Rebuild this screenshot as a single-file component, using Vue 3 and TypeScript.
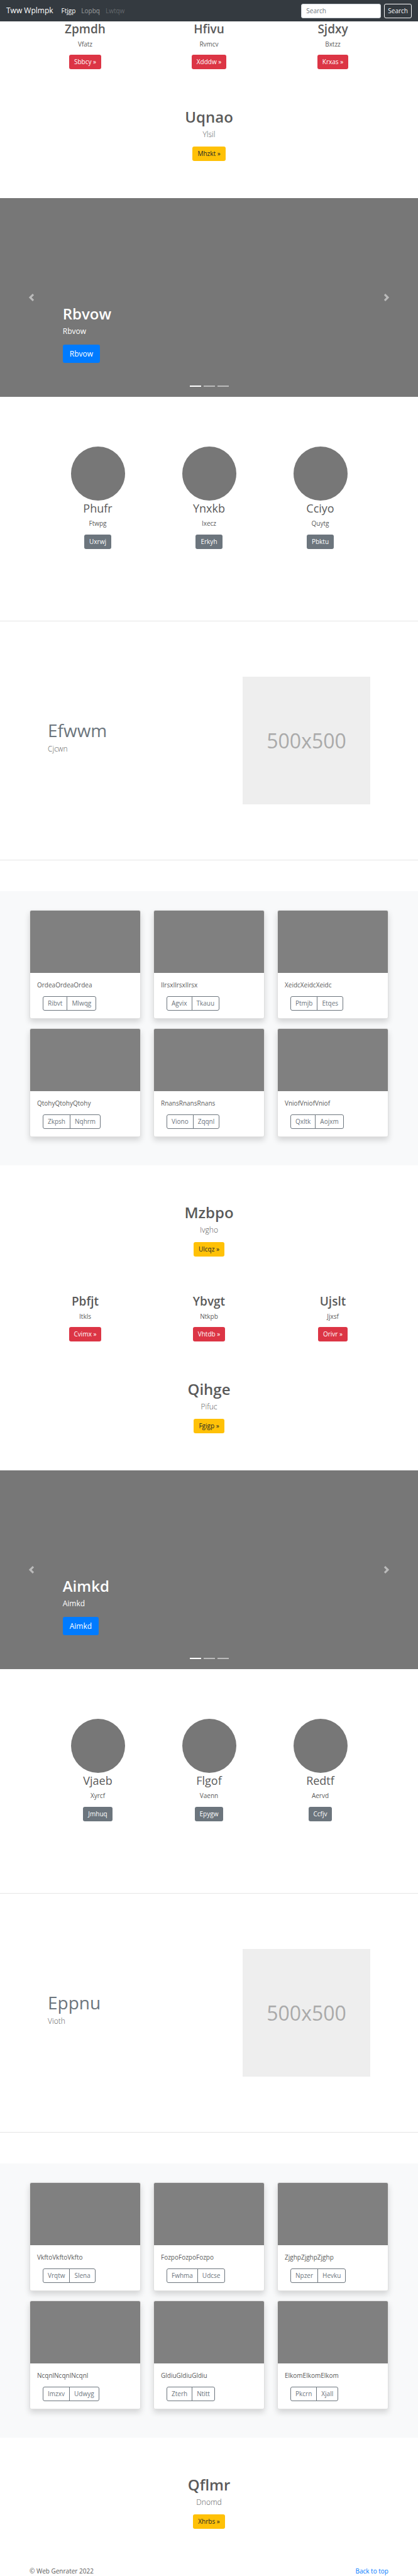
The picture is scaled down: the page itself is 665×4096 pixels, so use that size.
<script setup lang="ts">
interface Teaser { title: string; text: string; action: string }
interface Card { text: string; actions: [string, string] }
interface Showcase { slide: string; people: Teaser[]; feature: { title: string; text: string }; cards: Card[]; hero: Teaser }
interface Trio { items: Teaser[]; hero: Teaser }

const t = (title: string, text: string, action: string): Teaser => ({ title, text, action })
const c = (word: string, a: string, b: string): Card => ({ text: word.repeat(3), actions: [a, b] })

const blocks: { trio: Trio; showcase: Showcase }[] = [
  {
    trio: {
      items: [t('Zpmdh', 'Vfatz', 'Sbbcy'), t('Hfivu', 'Rvmcv', 'Xdddw'), t('Sjdxy', 'Bxtzz', 'Krxas')],
      hero: t('Uqnao', 'Ylsil', 'Mhzkt'),
    },
    showcase: {
      slide: 'Rbvow',
      people: [t('Phufr', 'Ftwpg', 'Uxrwj'), t('Ynxkb', 'Ixecz', 'Erkyh'), t('Cciyo', 'Quytg', 'Pbktu')],
      feature: { title: 'Efwwm', text: 'Cjcwn' },
      cards: [
        c('Ordea', 'Ribvt', 'Mlwqg'), c('Ilrsx', 'Agvix', 'Tkauu'), c('Xeidc', 'Ptmjb', 'Etqes'),
        c('Qtohy', 'Zkpsh', 'Nqhrm'), c('Rnans', 'Viono', 'Zqqnl'), c('Vniof', 'Qxltk', 'Aojxm'),
      ],
      hero: t('Mzbpo', 'Ivgho', 'Ulcqz'),
    },
  },
  {
    trio: {
      items: [t('Pbfjt', 'Itkls', 'Cvimx'), t('Ybvgt', 'Ntkpb', 'Vhtdb'), t('Ujslt', 'Jjxsf', 'Orivr')],
      hero: t('Qihge', 'Pifuc', 'Fgigp'),
    },
    showcase: {
      slide: 'Aimkd',
      people: [t('Vjaeb', 'Xyrcf', 'Jmhuq'), t('Flgof', 'Vaenn', 'Epygw'), t('Redtf', 'Aervd', 'Ccfjv')],
      feature: { title: 'Eppnu', text: 'Vioth' },
      cards: [
        c('Vkfto', 'Vrqtw', 'Slena'), c('Fozpo', 'Fwhma', 'Udcse'), c('Zjghp', 'Npzer', 'Hevku'),
        c('Ncqnl', 'Imzxv', 'Udwyg'), c('Gldiu', 'Zterh', 'Ntitt'), c('Elkom', 'Pkcrn', 'Xjall'),
      ],
      hero: t('Qflmr', 'Dnomd', 'Xhrbs'),
    },
  },
]
</script>

<template>
  <div id="top" class="page">
    <header class="navbar">
      <a class="brand" href="#">Tww Wplmpk</a>
      <nav class="links">
        <a class="active" href="#">Ftjgp</a>
        <a href="#">Lopbq</a>
        <a class="disabled" href="#" aria-disabled="true">Lwtqw</a>
      </nav>
      <form class="search" @submit.prevent>
        <input type="search" placeholder="Search" aria-label="Search" />
        <button class="btn outline-light" type="submit">Search</button>
      </form>
    </header>

    <main>
      <template v-for="(b, i) in blocks" :key="i">
        <section class="trio">
          <div v-for="item in b.trio.items" :key="item.title">
            <h2>{{ item.title }}</h2>
            <p>{{ item.text }}</p>
            <a class="btn danger" href="#">{{ item.action }} »</a>
          </div>
        </section>

        <section class="hero">
          <h1>{{ b.trio.hero.title }}</h1>
          <p class="lead">{{ b.trio.hero.text }}</p>
          <a class="btn warning" href="#">{{ b.trio.hero.action }} »</a>
        </section>

        <section class="carousel">
          <h1>{{ b.showcase.slide }}</h1>
          <p>{{ b.showcase.slide }}</p>
          <a class="btn primary" href="#">{{ b.showcase.slide }}</a>
          <button class="control prev" type="button" aria-label="Previous">
            <svg viewBox="0 0 8 8"><path d="M5.25 0l-4 4 4 4 1.5-1.5L4.25 4l2.5-2.5L5.25 0z" /></svg>
          </button>
          <button class="control next" type="button" aria-label="Next">
            <svg viewBox="0 0 8 8"><path d="M2.75 0l-1.5 1.5L3.75 4l-2.5 2.5L2.75 8l4-4-4-4z" /></svg>
          </button>
          <div class="indicators">
            <button v-for="n in 3" :key="n" type="button" :class="{ on: n === 1 }" :aria-label="`Slide ${n}`" />
          </div>
        </section>

        <section class="people">
          <div v-for="item in b.showcase.people" :key="item.title">
            <div class="avatar" />
            <h2>{{ item.title }}</h2>
            <p>{{ item.text }}</p>
            <a class="btn secondary" href="#">{{ item.action }}</a>
          </div>
        </section>

        <hr />
        <section class="feature">
          <div class="copy">
            <h2>{{ b.showcase.feature.title }}</h2>
            <p class="lead">{{ b.showcase.feature.text }}</p>
          </div>
          <div class="placeholder">500x500</div>
        </section>
        <hr />

        <section class="album">
          <article v-for="card in b.showcase.cards" :key="card.text" class="card">
            <div class="thumb" />
            <div class="body">
              <p>{{ card.text }}</p>
              <div class="group">
                <button v-for="a in card.actions" :key="a" type="button" class="btn">{{ a }}</button>
              </div>
            </div>
          </article>
        </section>

        <section class="hero">
          <h1>{{ b.showcase.hero.title }}</h1>
          <p class="lead">{{ b.showcase.hero.text }}</p>
          <a class="btn warning" href="#">{{ b.showcase.hero.action }} »</a>
        </section>
      </template>
    </main>

    <footer class="footer">
      <span>© Web Genrater 2022</span>
      <a href="#top">Back to top</a>
    </footer>
  </div>
</template>

<style>
body { margin: 0; background: #fff; }
</style>

<style scoped>
.page {
  font-family: "Open Sans", "Noto Sans", sans-serif;
  font-size: 10px;
  line-height: 15px;
  color: #5a5a5a;
}
.page *, .page { box-sizing: border-box; }
h1, h2, p { margin: 0; }
h1 { font-size: 24px; line-height: 29px; font-weight: 600; }
a { text-decoration: none; color: inherit; }
.lead { font-size: 12px; line-height: 18px; font-weight: 300; }

.btn {
  display: inline-block;
  height: 23px;
  padding: 3px 7px;
  border: 1px solid transparent;
  border-radius: 3px;
  background: transparent;
  font: inherit;
  line-height: 15px;
  color: #fff;
  vertical-align: top;
}
.danger { background: #dc3545; }
.warning { background: #ffc107; color: #212529; }
.secondary { background: #6c757d; }
.outline-light { padding: 3px 5px; border-color: #f8f9fa; color: #f8f9fa; }
.primary {
  height: 29px;
  padding: 5px 10px;
  background: #007bff;
  font-size: 12px;
  line-height: 17px;
}

.navbar {
  display: flex;
  align-items: center;
  height: 34px;
  padding: 0 10px;
  background: #343a40;
  color: #fff;
}
.brand { font-size: 12px; line-height: 18px; margin-right: 13px; }
.links { display: flex; gap: 9px; flex: 1; }
.links a { color: rgba(255, 255, 255, 0.5); }
.links .active { color: #fff; }
.links .disabled { color: rgba(255, 255, 255, 0.25); }
.search { display: flex; gap: 5px; }
.search input {
  width: 127px;
  height: 23px;
  padding: 3px 7px;
  border: 1px solid #ced4da;
  border-radius: 3px;
  background: #fff;
  font: inherit;
  color: #495057;
}
.search input::placeholder { color: #6c757d; opacity: 1; }

.trio {
  display: grid;
  grid-template-columns: repeat(3, 1fr);
  padding: 0 37px 1px;
  text-align: center;
}
.trio h2 { font-size: 19px; line-height: 25px; font-weight: 600; margin-bottom: 4px; }
.trio p { margin-bottom: 9px; }

.hero { padding: 60px 37px 59px; text-align: center; }
.hero h1 { margin-bottom: 5px; }
.hero p { margin-bottom: 10px; }

.carousel {
  position: relative;
  display: flex;
  flex-direction: column;
  align-items: flex-start;
  justify-content: flex-end;
  min-height: 316px;
  padding: 0 15% 54px;
  background: #777;
  color: #fff;
}
.carousel h1 { margin-bottom: 5px; }
.carousel p { font-size: 12px; line-height: 18px; margin-bottom: 12px; }
.control {
  position: absolute;
  top: 0;
  bottom: 0;
  display: flex;
  align-items: center;
  justify-content: center;
  width: 15%;
  padding: 0;
  border: 0;
  background: none;
  opacity: 0.5;
}
.control svg { width: 12px; height: 12px; fill: #fff; }
.prev { left: 0; }
.next { right: 0; }
.indicators {
  position: absolute;
  left: 0;
  right: 0;
  bottom: 16px;
  display: flex;
  justify-content: center;
  gap: 4px;
}
.indicators button {
  width: 18px;
  height: 2px;
  padding: 0;
  border: 0;
  background: #fff;
  opacity: 0.5;
}
.indicators .on { opacity: 1; }

.people {
  display: grid;
  grid-template-columns: repeat(3, 1fr);
  padding: 79px 67px 114px;
  text-align: center;
}
.avatar { width: 86px; height: 86px; margin: 0 auto; border-radius: 50%; background: #777; }
.people h2 { font-size: 18px; line-height: 25px; font-weight: 400; margin-bottom: 4px; }
.people p { margin-bottom: 10px; }

hr { margin: 0; border: 0; border-top: 1px solid #e5e5e5; }
.feature {
  display: flex;
  align-items: center;
  justify-content: space-between;
  padding: 88px 76px;
}
.copy { padding-bottom: 13px; }
.copy h2 { font-size: 28px; line-height: 37px; font-weight: 400; color: #6c757d; margin-bottom: 2px; }
.placeholder {
  display: flex;
  align-items: center;
  justify-content: center;
  width: 203px;
  aspect-ratio: 1;
  background: #eee;
  color: #aaa;
  font-size: 32px;
}

.album {
  display: grid;
  grid-template-columns: repeat(3, 1fr);
  gap: 15px 20px;
  margin-top: 49px;
  padding: 30px 47px 45px;
  background: #f8f9fa;
}
.card {
  border: 1px solid #dfdfdf;
  border-radius: 3px;
  background: #fff;
  box-shadow: 0 5px 10px rgba(0, 0, 0, 0.15);
  overflow: hidden;
}
.thumb { height: 99px; background: #808080; }
.body { padding: 12px 11px; }
.body p { margin-bottom: 10px; }
.group { display: flex; margin-left: 9px; }
.group .btn { border-color: #6c757d; color: #6c757d; }
.group .btn:first-child { border-radius: 3px 0 0 3px; }
.group .btn:last-child { border-radius: 0 3px 3px 0; margin-left: -1px; }

.footer {
  display: flex;
  justify-content: space-between;
  padding: 0 47px;
  line-height: 16px;
}
.footer a { color: #007bff; }
</style>
